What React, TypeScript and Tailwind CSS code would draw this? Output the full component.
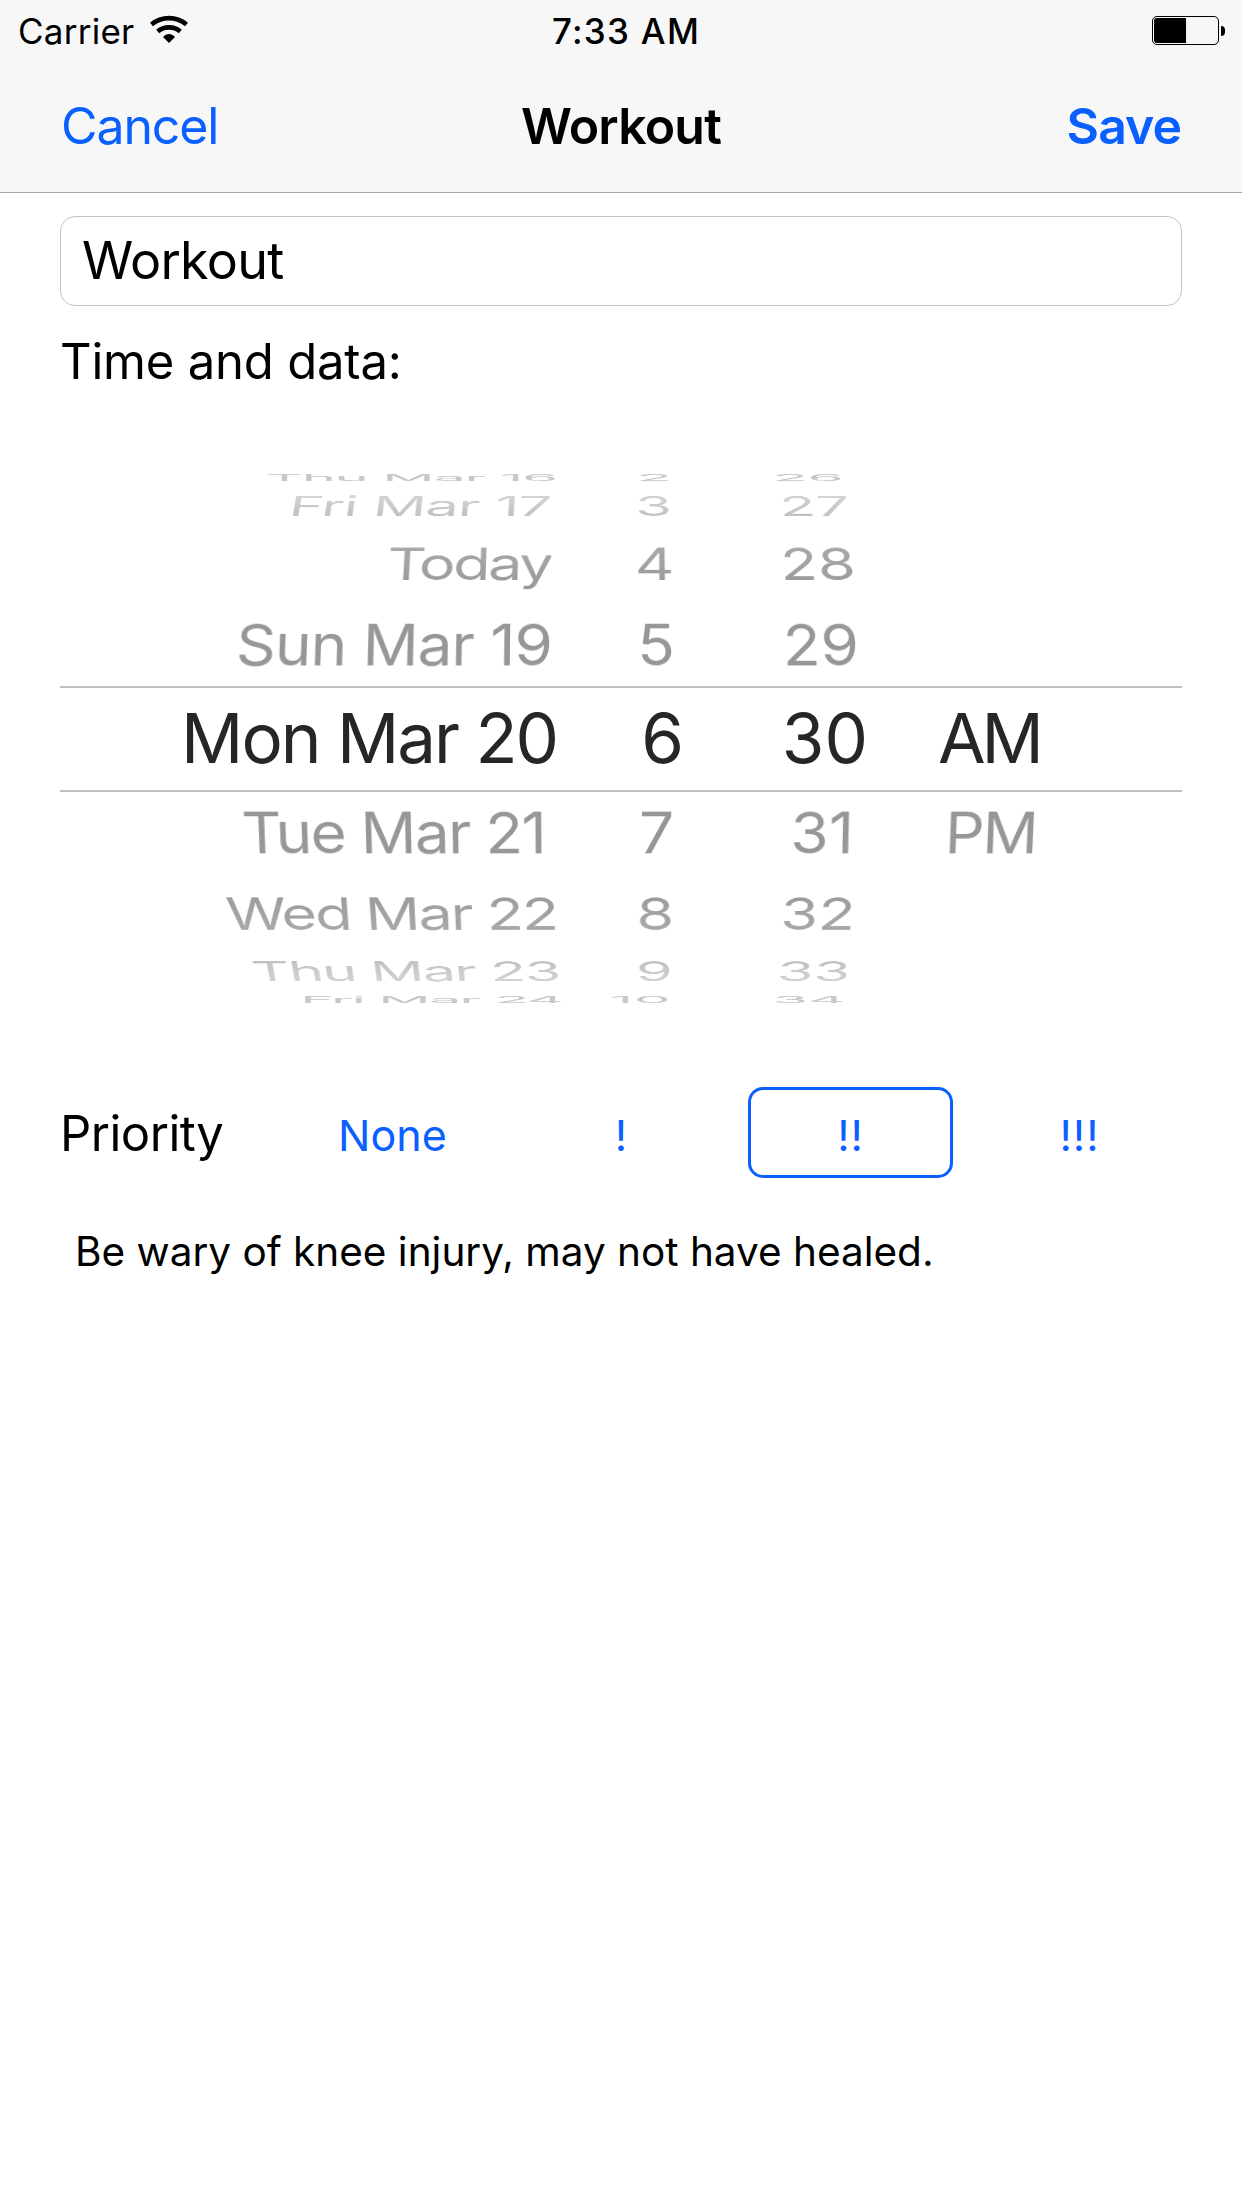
type Item = { text: string; cls: string };
type WheelRow = {
  box: string;
  plane: string;
  ink: string;
  date?: Item;
  hour?: Item;
  minute?: Item;
  period?: Item;
};

const rows: WheelRow[] = [
  {
    box: "h-[14px]",
    plane: "[transform:translateY(-3.5px)_scale(0.935,0.14)]",
    ink: "text-[#c8c8c8]",
    date: { text: "Thu Mar 16", cls: "mr-[4px] tracking-[-1.5px]" },
    hour: { text: "2", cls: "" },
    minute: { text: "26", cls: "" },
  },
  {
    box: "h-[36px]",
    plane: "[transform:scaleX(0.96)_perspective(3700px)_rotateX(63.5deg)]",
    ink: "bg-linear-to-b from-[#dadada] to-[#bababa] bg-clip-text text-transparent",
    date: { text: "Fri Mar 17", cls: "mr-[8px] tracking-[-1.1px]" },
    hour: { text: "3", cls: "mr-[1px]" },
    minute: { text: "27", cls: "" },
  },
  {
    box: "h-[79px]",
    plane: "[transform:scaleX(0.985)_perspective(3700px)_rotateX(44deg)]",
    ink: "bg-linear-to-b from-[#adadad] to-[#979797] bg-clip-text text-transparent",
    date: { text: "Today", cls: "mr-[6px] tracking-[-2.5px]" },
    hour: { text: "4", cls: "" },
    minute: { text: "28", cls: "" },
  },
  {
    box: "h-[83px]",
    plane: "[transform:perspective(3700px)_rotateX(22deg)]",
    ink: "text-[#979797]",
    date: { text: "Sun Mar 19", cls: "mr-[4px] tracking-[-1px]" },
    hour: { text: "5", cls: "" },
    minute: { text: "29", cls: "" },
  },
  {
    box: "h-[106px] border-y-2 border-[#c0c0c0] text-[69px]",
    plane: "[transform:translateY(-1px)]",
    ink: "text-[#262626]",
    date: { text: "Mon Mar 20", cls: "mr-[-1px] tracking-[-2px]" },
    hour: { text: "6", cls: "mr-[-9px]" },
    minute: { text: "30", cls: "mr-[-9px]" },
    period: { text: "AM", cls: "ml-[-1px] tracking-[-4px]" },
  },
  {
    box: "h-[82px]",
    plane: "[transform:perspective(3700px)_rotateX(-22deg)]",
    ink: "text-[#979797]",
    date: { text: "Tue Mar 21", cls: "mr-[11px] tracking-[-1.7px]" },
    hour: { text: "7", cls: "mr-[1px]" },
    minute: { text: "31", cls: "mr-[5px]" },
    period: { text: "PM", cls: "ml-[6px] tracking-[-2px]" },
  },
  {
    box: "h-[79px]",
    plane: "[transform:scaleX(0.985)_perspective(3700px)_rotateX(-44deg)]",
    ink: "bg-linear-to-b from-[#979797] to-[#adadad] bg-clip-text text-transparent",
    date: { text: "Wed Mar 22", cls: "tracking-[-2.1px]" },
    hour: { text: "8", cls: "" },
    minute: { text: "32", cls: "" },
  },
  {
    box: "h-[36px]",
    plane: "[transform:translateY(0.5px)_scaleX(0.96)_perspective(3700px)_rotateX(-63.5deg)]",
    ink: "bg-linear-to-b from-[#bababa] to-[#dadada] bg-clip-text text-transparent",
    date: { text: "Thu Mar 23", cls: "mr-[-1px] tracking-[-1.8px]" },
    hour: { text: "9", cls: "" },
    minute: { text: "33", cls: "mr-[-1px]" },
  },
  {
    box: "h-[14px]",
    plane: "[transform:translateY(3.5px)_scale(0.935,0.14)]",
    ink: "text-[#c8c8c8]",
    date: { text: "Fri Mar 24", cls: "mr-[-2px] tracking-[-2px]" },
    hour: { text: "10", cls: "tracking-[1px]" },
    minute: { text: "34", cls: "mr-[-2px]" },
  },
];

function Label({ item, ink }: { item?: Item; ink: string }) {
  return item ? <span className={`block leading-[80px] ${ink} ${item.cls}`}>{item.text}</span> : null;
}

function Wheel() {
  return (
    <div className="mx-[60px] mt-[73px] flex h-[529px] flex-col text-[62px]">
      {rows.map((row, i) => (
        <div key={i} className={`flex shrink-0 items-center ${row.box}`}>
          <div
            className={`grid w-full shrink-0 grid-cols-[496px_119px_184px_80px_1fr] whitespace-nowrap ${row.plane}`}
          >
            <div className="flex justify-end"><Label item={row.date} ink={row.ink} /></div>
            <div className="flex justify-end"><Label item={row.hour} ink={row.ink} /></div>
            <div className="flex justify-end"><Label item={row.minute} ink={row.ink} /></div>
            <div />
            <div className="flex"><Label item={row.period} ink={row.ink} /></div>
          </div>
        </div>
      ))}
    </div>
  );
}

function WifiIcon() {
  return (
    <svg width="38" height="28" viewBox="0 0 38 28" className="ml-[16px] mt-[15px]" fill="none">
      <path d="M1.5 9.5 C11.5 1 26.5 1 36.5 9.5" stroke="#000" strokeWidth="4.6" />
      <path d="M7.7 16.4 C14 11 24 11 30.3 16.4" stroke="#000" strokeWidth="4.6" />
      <path d="M13 22 C16.5 18 21.5 18 25 22 L19 28 Z" fill="#000" />
    </svg>
  );
}

function Battery() {
  return (
    <div className="mr-[17px] mt-[16px] flex h-[29px] items-center">
      <div className="h-[29px] w-[67px] rounded-[5px] border border-black p-px">
        <div className="h-full w-[32px] rounded-l-[3px] bg-black" />
      </div>
      <div className="ml-[2px] mt-[1px] h-[10px] w-[4px] rounded-r-full bg-black" />
    </div>
  );
}

export default function App() {
  return (
    <div className="h-[2208px] w-[1242px] overflow-hidden bg-white font-['Inter',sans-serif] text-black">
      <header className="h-[193px] border-b border-[#a6a6a6] bg-[#f7f7f7]">
        <div className="grid h-[62px] grid-cols-[1fr_auto_1fr] text-[35px] leading-[62px]">
          <div className="flex pl-[18px]">
            <span className="tracking-[0.25px]">Carrier</span>
            <WifiIcon />
          </div>
          <span className="translate-x-[5px] font-medium tracking-[1.25px]">7:33 AM</span>
          <div className="flex justify-end">
            <Battery />
          </div>
        </div>
        <div className="grid h-[130px] grid-cols-[1fr_auto_1fr] items-start px-[61px] text-[50px] leading-[128px]">
          <button className="text-left tracking-[-1.1px] text-[#0a60ff]">Cancel</button>
          <h1 className="font-semibold tracking-[-0.8px]">Workout</h1>
          <button className="text-right font-semibold tracking-[-1px] text-[#0a60ff]">Save</button>
        </div>
      </header>

      <main>
        <div className="mx-[60px] mt-[23px] h-[90px] rounded-[15px] border border-[#c4c4c4] pl-[21px] text-[52px] leading-[88px] tracking-[-0.7px]">
          Workout
        </div>
        <div className="ml-[60px] mt-[25px] h-[70px] text-[49px] leading-[62px] tracking-[-0.2px]">Time and data:</div>

        <Wheel />

        <div className="mt-[84px] flex h-[91px] items-center pl-[60px] text-[#0a60ff]">
          <span className="w-[230px] pt-[1px] text-[49px] leading-[91px] tracking-[-0.5px] text-black">Priority</span>
          <div className="grid h-full grid-cols-4 gap-[24px] text-[43px]">
            <button className="w-[205px] pt-[6px] tracking-[0.1px]">None</button>
            <button className="w-[205px] pt-[6px] tracking-[1px]">!</button>
            <button className="w-[205px] rounded-[15px] border-[3px] border-[#0a60ff] pt-[6px] tracking-[1px]">!!</button>
            <button className="w-[205px] pt-[6px] tracking-[1px]">!!!</button>
          </div>
        </div>

        <p className="ml-[75px] mt-[44px] text-[40.5px] leading-[60px]">Be wary of knee injury, may not have healed.</p>
      </main>
    </div>
  );
}
